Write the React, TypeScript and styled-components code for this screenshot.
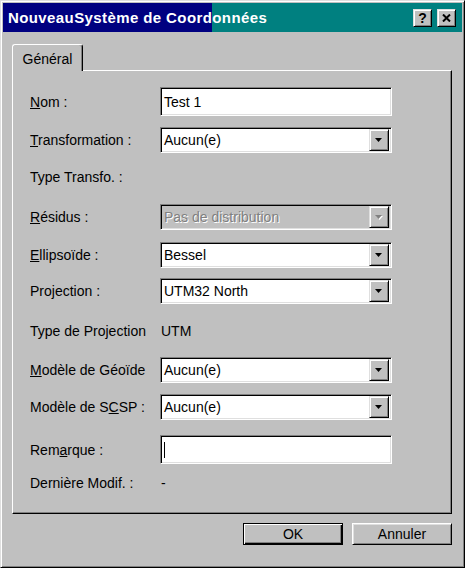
import styled, { createGlobalStyle } from "styled-components";

const GlobalStyle = createGlobalStyle`
	html,
	body {
		margin: 0;
		padding: 0;
		background: #c0c0c0;
	}

	body {
		font-family: "Liberation Sans", Arial, sans-serif;
		font-size: 14px;
		color: #000;
	}
`;

const Window = styled.div`
	box-sizing: border-box;
	width: 465px;
	height: 568px;
	padding: 2px;
	background: #c0c0c0;
	border: 1px solid;
	border-color: #dfdfdf #000 #000 #dfdfdf;
	box-shadow: inset 1px 1px #fff, inset -1px -1px #808080;
	display: flex;
	flex-direction: column;
`;

const TitleBar = styled.div`
	height: 29px;
	display: flex;
	align-items: center;
	padding: 0 6px 0 5px;
	background: linear-gradient(to right, #000080 0 209px, #008080 209px);
`;

const TitleText = styled.div`
	flex: 1 1 auto;
	color: #fff;
	font-weight: bold;
	font-size: 15px;
	letter-spacing: 0.4px;
`;

const TitleButtons = styled.div`
	display: flex;
	gap: 5px;
`;

const TitleButton = styled.div`
	box-sizing: border-box;
	width: 19px;
	height: 18px;
	display: flex;
	align-items: center;
	justify-content: center;
	background: #c0c0c0;
	border: 1px solid;
	border-color: #dfdfdf #000 #000 #dfdfdf;
	box-shadow: inset 1px 1px #fff, inset -1px -1px #808080;
	font-weight: bold;
	font-size: 14px;
	line-height: 1;
`;

const Body = styled.div`
	padding: 12px 10px 0 9px;
	display: flex;
	flex-direction: column;
`;

const TabStrip = styled.div`
	display: flex;
`;

const Tab = styled.div`
	position: relative;
	z-index: 1;
	box-sizing: border-box;
	width: 71px;
	height: 27px;
	margin-bottom: -1px;
	display: flex;
	align-items: center;
	justify-content: center;
	padding-top: 1px;
	background: #c0c0c0;
	border: 1px solid;
	border-color: #fff #000 transparent #fff;
	border-bottom: none;
	border-radius: 3px 3px 0 0;
	box-shadow: inset -1px 0 #808080;
`;

const Panel = styled.div`
	box-sizing: border-box;
	height: 444px;
	padding: 16px 0 0 17px;
	border: 1px solid;
	border-color: #fff #000 #000 #fff;
	box-shadow: inset -1px -1px #808080;
`;

const Row = styled.div<{ $h: number; $ch?: number }>`
	height: ${(p) => p.$h}px;
	display: grid;
	grid-template-columns: 130px 232px;
	grid-template-rows: ${(p) => p.$ch ?? 26}px;
	align-items: center;
`;

const Label = styled.div`
	white-space: nowrap;
`;

const Value = styled.div`
	padding-left: 1px;
`;

const Field = styled.div<{ $disabled?: boolean }>`
	box-sizing: border-box;
	height: 100%;
	display: flex;
	align-items: center;
	padding: 0 2px 0 3px;
	background: ${(p) => (p.$disabled ? "#c0c0c0" : "#fff")};
	color: ${(p) => (p.$disabled ? "#808080" : "#000")};
	text-shadow: ${(p) => (p.$disabled ? "1px 1px #fff" : "none")};
	border: 1px solid;
	border-color: #808080 #fff #fff #808080;
	box-shadow: inset 1px 1px #000, inset -1px -1px #dfdfdf;
`;

const FieldText = styled.span`
	flex: 1 1 auto;
`;

const Caret = styled.span`
	width: 1px;
	height: 16px;
	background: #000;
`;

const ArrowButton = styled.div`
	box-sizing: border-box;
	width: 20px;
	height: 22px;
	display: flex;
	align-items: center;
	justify-content: center;
	background: #c0c0c0;
	border: 1px solid;
	border-color: #dfdfdf #000 #000 #dfdfdf;
	box-shadow: inset 1px 1px #fff, inset -1px -1px #808080;
`;

const Footer = styled.div`
	display: flex;
	justify-content: flex-end;
	gap: 9px;
	margin-top: 9px;
`;

const Button = styled.div<{ $default?: boolean }>`
	box-sizing: border-box;
	width: 100px;
	height: 22px;
	display: flex;
	align-items: center;
	justify-content: center;
	background: #c0c0c0;
	border: 1px solid;
	border-color: ${(p) => (p.$default ? "#000" : "#fff #000 #000 #fff")};
	box-shadow: ${(p) =>
		p.$default
			? "inset 1px 1px #fff, inset -1px -1px #000, inset -2px -2px #808080"
			: "inset 1px 1px #dfdfdf, inset -1px -1px #808080"};
`;

function DropArrow({ disabled }: { disabled?: boolean }) {
	return (
		<svg width="8" height="5" viewBox="0 0 8 5" style={{ overflow: "visible" }}>
			{disabled && <path d="M1 1h7L4.5 5z" fill="#fff" />}
			<path d="M0 0h7L3.5 4z" fill={disabled ? "#808080" : "#000"} />
		</svg>
	);
}

interface SelectProps {
	value: string;
	disabled?: boolean;
}

function Select({ value, disabled }: SelectProps) {
	return (
		<Field $disabled={disabled}>
			<FieldText>{value}</FieldText>
			<ArrowButton>
				<DropArrow disabled={disabled} />
			</ArrowButton>
		</Field>
	);
}

function App() {
	return (
		<>
			<GlobalStyle />
			<Window>
				<TitleBar>
					<TitleText>NouveauSystème de Coordonnées</TitleText>
					<TitleButtons>
						<TitleButton>?</TitleButton>
						<TitleButton>
							<svg width="9" height="8" viewBox="0 0 9 8">
								<path d="M1 0.5l7 7M8 0.5l-7 7" stroke="#000" strokeWidth="2" />
							</svg>
						</TitleButton>
					</TitleButtons>
				</TitleBar>
				<Body>
					<TabStrip>
						<Tab>Général</Tab>
					</TabStrip>
					<Panel>
						<Row $h={40} $ch={29}>
							<Label>
								<u>N</u>om :
							</Label>
							<Field>
								<FieldText>Test 1</FieldText>
							</Field>
						</Row>
						<Row $h={37}>
							<Label>
								<u>T</u>ransformation :
							</Label>
							<Select value="Aucun(e)" />
						</Row>
						<Row $h={40}>
							<Label>Type Transfo. :</Label>
						</Row>
						<Row $h={38}>
							<Label>
								<u>R</u>ésidus :
							</Label>
							<Select value="Pas de distribution" disabled />
						</Row>
						<Row $h={36}>
							<Label>
								<u>E</u>llipsoïde :
							</Label>
							<Select value="Bessel" />
						</Row>
						<Row $h={40}>
							<Label>Projection :</Label>
							<Select value="UTM32 North" />
						</Row>
						<Row $h={39}>
							<Label>Type de Projection</Label>
							<Value>UTM</Value>
						</Row>
						<Row $h={37}>
							<Label>
								<u>M</u>odèle de Géoïde
							</Label>
							<Select value="Aucun(e)" />
						</Row>
						<Row $h={41}>
							<Label>
								Modèle de S<u>C</u>SP :
							</Label>
							<Select value="Aucun(e)" />
						</Row>
						<Row $h={35} $ch={29}>
							<Label>
								Rem<u>a</u>rque :
							</Label>
							<Field>
								<Caret />
							</Field>
						</Row>
						<Row $h={26}>
							<Label>Dernière Modif. :</Label>
							<Value>-</Value>
						</Row>
					</Panel>
					<Footer>
						<Button $default>OK</Button>
						<Button>Annuler</Button>
					</Footer>
				</Body>
			</Window>
		</>
	);
}

export default App;
